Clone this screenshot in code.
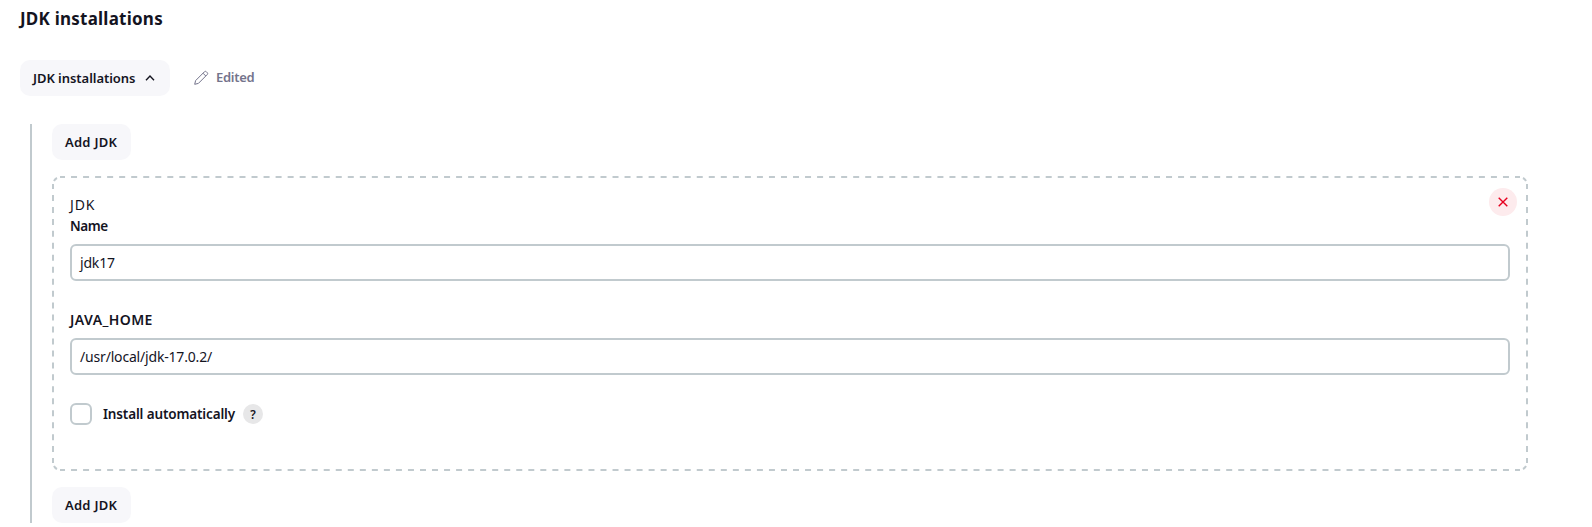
<main>
  <h2>JDK installations</h2>
  <div class="toolbar">
    <button class="btn toggle"><span>JDK installations</span>
      <svg width="12" height="12" viewBox="0 0 12 12"><path d="M2 8.2 6 4l4 4.2" /></svg>
    </button>
    <div class="edited">
      <svg width="16" height="16" viewBox="0 0 16 16"><path d="m1.7 14.3.9-3.7 8.8-8.8a1.4 1.4 0 0 1 2 0l.8.8a1.4 1.4 0 0 1 0 2l-8.8 8.8zM10 3.2 12.8 6" /></svg>
      <span>Edited</span>
    </div>
  </div>
  <section>
    <button class="btn add">Add JDK</button>
    <div class="card">
      <svg class="dash" width="1476" height="295">
        <path class="across" d="M8 1H1468M8 294H1468" />
        <path class="down" d="M1 8V287M1475 8V287" />
        <path d="M2 5Q3 3 5 2M1471 2Q1473 3 1474 5M1474 290Q1473 292 1471 293M5 293Q3 292 2 290" />
      </svg>
      <button class="close" aria-label="Delete"><svg width="12" height="12" viewBox="0 0 12 12"><path d="m1.7 1.7 8.6 8.6M10.3 1.7l-8.6 8.6" /></svg></button>
      <div class="kind">JDK</div>
      <div class="label name">Name</div>
      <div class="input">jdk17</div>
      <div class="label home">JAVA_HOME</div>
      <div class="input">/usr/local/jdk-17.0.2/</div>
      <div class="check"><span class="box"></span><span class="label auto">Install automatically</span><span class="help">?</span></div>
    </div>
    <button class="btn add">Add JDK</button>
  </section>
</main>

<style>
  :global(body) { margin: 0; background: #fff; }
  * { box-sizing: border-box; }
  main { height: 527px; overflow: hidden; padding-left: 20px; font: 14px/21px "Noto Sans", "Open Sans", sans-serif; color: #14141f; }
  h2 { margin: 0; padding-top: 6px; height: 60px; font-size: 17px; line-height: 26px; font-weight: 700; letter-spacing: 0.23px; }
  button { font: inherit; color: inherit; border: 0; padding: 0; }
  svg { fill: none; stroke: currentColor; flex: none; }
  .toolbar { display: flex; height: 64px; }
  .btn { display: flex; align-items: center; height: 36px; border-radius: 10px; background: #f7f7fa; font-size: 13px; font-weight: 600; padding-left: 13px; }
  .toggle { width: 150px; gap: 9px; letter-spacing: -0.05px; }
  .toggle svg { stroke-width: 1.4; }
  .edited { display: flex; height: 36px; padding: 0 0 2px 23px; align-items: center; gap: 7px; color: #74748c; font-size: 13px; font-weight: 600; letter-spacing: -0.3px; }
  .edited svg { margin-top: 2px; }
  section { margin-left: 10px; border-left: 2px solid #c1cace; padding-left: 20px; height: 399px; width: 1498px; }
  .add { width: 79px; letter-spacing: 0.25px; }
  .card { position: relative; height: 295px; margin: 16px 0; padding: 18px 18px 19px; }
  .dash { position: absolute; inset: 0; color: #c1cace; stroke-width: 2; }
  .across { stroke-dasharray: 6 6.033; stroke-dashoffset: 1; }
  .down { stroke-dasharray: 6 5.96; stroke-dashoffset: 1; }
  .close { position: absolute; top: 12px; right: 11px; width: 28px; height: 28px; border-radius: 50%; background: #fdebed; color: #e6001f; display: grid; place-items: center; }
  .close svg { stroke-width: 1.4; }
  .kind { height: 22px; letter-spacing: 0.9px; }
  .label { font-weight: 600; }
  .name { height: 28px; font-size: 13.5px; letter-spacing: -0.45px; }
  .home { height: 29px; margin-top: 28px; letter-spacing: 0.4px; }
  .input { height: 37px; border: 2px solid #c1cace; border-radius: 6px; padding: 6px 8px; letter-spacing: -0.18px; }
  .check { display: flex; align-items: center; height: 22px; margin-top: 28px; }
  .box { width: 22px; height: 22px; border: 2px solid #c1cace; border-radius: 6px; margin-right: 11px; }
  .auto { font-size: 13.5px; letter-spacing: -0.14px; }
  .help { width: 20px; height: 20px; border-radius: 50%; background: #e7e7e8; display: grid; place-items: center; font-size: 12px; font-weight: 600; margin-left: 8px; }
</style>
